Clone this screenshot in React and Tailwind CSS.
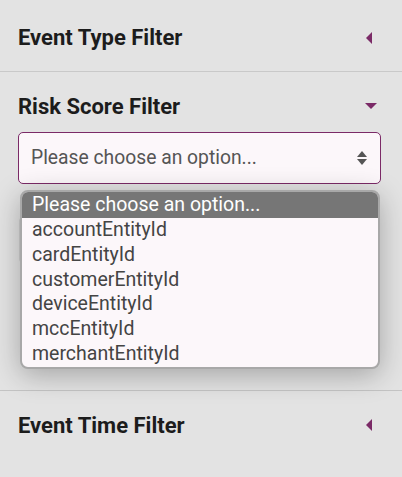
const options = [
  "accountEntityId",
  "cardEntityId",
  "customerEntityId",
  "deviceEntityId",
  "mccEntityId",
  "merchantEntityId",
];

const CaretLeft = () => (
  <svg width="8" height="14" viewBox="0 0 8 14" className="text-[#7b2a67]">
    <path d="M7 1 L1 7 L7 13 Z" fill="currentColor" />
  </svg>
);

const CaretDown = () => (
  <svg width="14" height="8" viewBox="0 0 14 8" className="text-[#7b2a67]">
    <path d="M1 1 L13 1 L7 7 Z" fill="currentColor" />
  </svg>
);

const UpDown = () => (
  <svg width="12" height="16" viewBox="0 0 12 16" className="text-[#555]">
    <path d="M6 1 L11 7 L1 7 Z" fill="currentColor" />
    <path d="M1 9 L11 9 L6 15 Z" fill="currentColor" />
  </svg>
);

const App = () => {
  return (
    <div
      className="w-[402px] h-[477px] bg-[#e3e3e3] overflow-hidden text-[#1c1c1c]"
      style={{ fontFamily: "Roboto, 'Liberation Sans', sans-serif" }}
    >
      {/* Event Type */}
      <div className="h-[72px] flex items-center justify-between pl-[18px] pr-[29px] pt-[4px] border-b border-[#c9c9c9]">
        <h3 className="text-[22px] font-bold">Event Type Filter</h3>
        <CaretLeft />
      </div>

      {/* Risk Score */}
      <div className="h-[319px] pl-[18px] pr-[21px] pt-[21px] border-b border-[#c4c4c4]">
        <div className="flex items-center justify-between pr-[3px] h-[26px]">
          <h3 className="text-[22px] font-bold">Risk Score Filter</h3>
          <CaretDown />
        </div>
        <div className="relative mt-[13px]">
          <div className="h-[52px] flex items-center justify-between pl-[12px] pr-[12px] rounded-[5px] border border-[#7b2a67] bg-[#fcf7fa]">
            <span className="text-[19.3px] text-[#555] pt-[1px]">Please choose an option...</span>
            <UpDown />
          </div>
          <div className="mt-[32px] mx-[1px] h-[48px] rounded-[5px] border border-[#cfcfcf] bg-[#e3e3e3]" />

          <div className="absolute left-[2px] right-[1px] top-[58px] rounded-[8px] border-2 border-[#a8a8a8] bg-[#fcf7fa] overflow-hidden shadow-[0_6px_28px_rgba(0,0,0,0.28)]">
            <div className="bg-[#767676] text-white text-[19.5px] leading-[26px] pl-[10px] h-[26px]">
              Please choose an option...
            </div>
            {options.map((o) => (
              <div key={o} className="text-[19.5px] leading-[24.8px] pl-[10px] text-[#444]">
                {o}
              </div>
            ))}
          </div>
        </div>
      </div>

      {/* Event Time */}
      <div className="h-[68px] flex items-center justify-between pl-[18px] pr-[29px]">
        <h3 className="text-[22px] font-bold">Event Time Filter</h3>
        <CaretLeft />
      </div>
    </div>
  );
};

export default App;
